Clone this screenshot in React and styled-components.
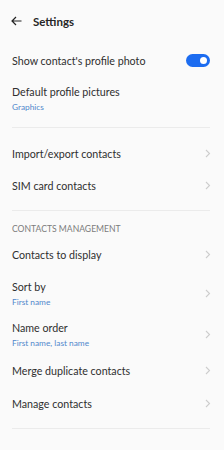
import React, { useState } from 'react'
import styled, { createGlobalStyle } from 'styled-components'

const Global = createGlobalStyle`
  html, body { margin: 0; padding: 0; background: #fafafa; }
  body { font-family: Lato, "Noto Sans", sans-serif; color: #2b2b2b; }
`

const Page = styled.div`
  width: 224px;
  height: 450px;
  background: #fafafa;
  overflow: hidden;
`

const Header = styled.header`
  display: flex;
  align-items: center;
  gap: 11px;
  height: 20px;
  padding: 11px 12px 0 11px;
`

const Title = styled.h1`
  margin: 0;
  font-size: 11.5px;
  font-weight: 700;
  color: #262626;
`

const List = styled.div`
  display: flex;
  flex-direction: column;
  padding: 0 14px 0 12px;
  margin-top: 14px;
`

const Row = styled.div`
  display: flex;
  align-items: center;
  justify-content: space-between;
  height: ${p => p.h || 32}px;
`

const Texts = styled.div`
  display: flex;
  flex-direction: column;
  gap: 4px;
`

const Label = styled.span`
  font-size: 10.7px;
  line-height: 13px;
  color: #2f2f2f;
`

const Sub = styled.span`
  font-size: 8.3px;
  line-height: 10px;
  color: #5088cc;
`

const Divider = styled.div`
  height: 1px;
  background: #ebebeb;
  margin: ${p => p.m || '0'};
`

const Section = styled.div`
  font-size: 8.6px;
  color: #7c7c7c;
  height: 22px;
  display: flex;
  align-items: center;
`

const Toggle = styled.button`
  width: 24px;
  height: 13px;
  border-radius: 7px;
  border: 0;
  padding: 0;
  background: #1c6cf0;
  position: relative;
  &::after {
    content: '';
    position: absolute;
    right: 3px;
    top: 3px;
    width: 7px;
    height: 7px;
    border-radius: 50%;
    background: #fff;
  }
`

const Chevron = () => (
  <svg width="6" height="9" viewBox="0 0 6 9" style={{ marginRight: -1 }}>
    <path d="M1 1l3.5 3.5L1 8" fill="none" stroke="#cdcdcd" strokeWidth="1.1" />
  </svg>
)

const Back = () => (
  <svg width="11" height="10" viewBox="0 0 11 10">
    <path d="M10.5 5H1M5 1L1 5l4 4" fill="none" stroke="#222" strokeWidth="1.2" />
  </svg>
)

const Item = ({ label, sub, h }) => (
  <Row h={h}>
    <Texts>
      <Label>{label}</Label>
      {sub && <Sub>{sub}</Sub>}
    </Texts>
    <Chevron />
  </Row>
)

export default function App() {
  const [on] = useState(true)
  return (
    <Page>
      <Global />
      <Header>
        <Back />
        <Title>Settings</Title>
      </Header>
      <List>
        <Row h={30}>
          <Label>Show contact's profile photo</Label>
          {on && <Toggle />}
        </Row>
        <Row h={46}>
          <Texts>
            <Label>Default profile pictures</Label>
            <Sub>Graphics</Sub>
          </Texts>
        </Row>
        <Divider m="6px 0 9px" />
        <Item label="Import/export contacts" />
        <Item label="SIM card contacts" />
        <Divider m="9px 0 7px" />
        <Section>CONTACTS MANAGEMENT</Section>
        <Item label="Contacts to display" h={28} />
        <Item label="Sort by" sub="First name" h={50} />
        <Item label="Name order" sub="First name, last name" h={32} />
        <Item label="Merge duplicate contacts" h={40} />
        <Item label="Manage contacts" h={26} />
        <Divider m="12px 0 0" />
      </List>
    </Page>
  )
}
